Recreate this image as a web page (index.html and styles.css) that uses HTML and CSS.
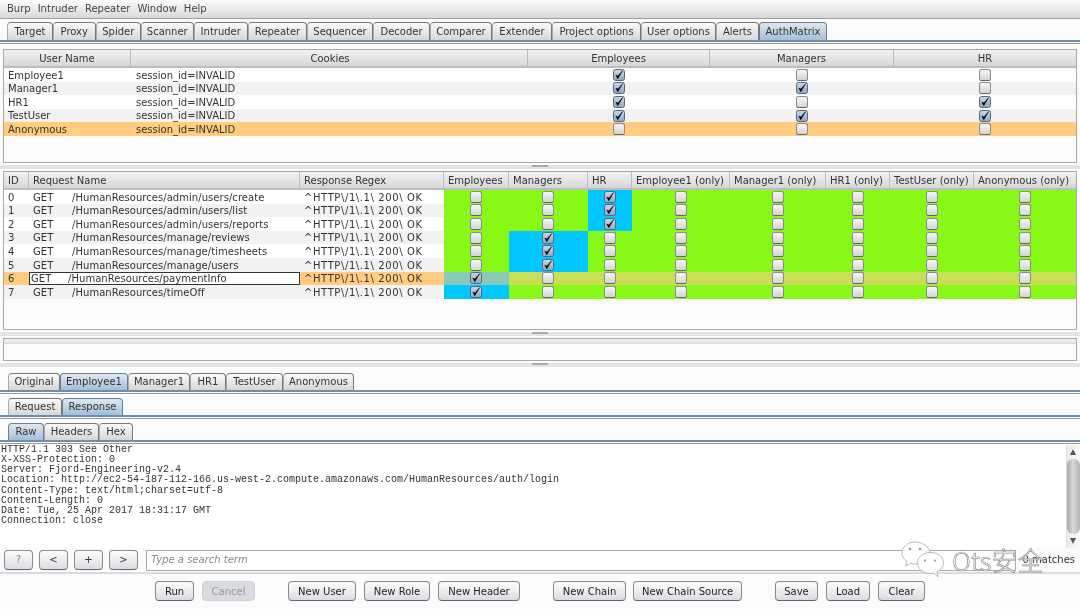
FILE: index.html
```html
<!DOCTYPE html>
<html lang="en">
<head>
<meta charset="utf-8">
<title>Burp Suite - AuthMatrix</title>
<link rel="stylesheet" href="styles.css">
</head>
<body>
<div class="app">
  <nav class="menu"><span>Burp</span><span>Intruder</span><span>Repeater</span><span>Window</span><span>Help</span></nav>

  <div class="tabs main-tabs">
    <span class="tab">Target</span><span class="tab">Proxy</span><span class="tab">Spider</span><span class="tab">Scanner</span><span class="tab">Intruder</span><span class="tab">Repeater</span><span class="tab">Sequencer</span><span class="tab">Decoder</span><span class="tab">Comparer</span><span class="tab">Extender</span><span class="tab">Project options</span><span class="tab">User options</span><span class="tab">Alerts</span><span class="tab active">AuthMatrix</span>
  </div>

  <section class="panel users">
    <div class="row head center"><span>User Name</span><span>Cookies</span><span>Employees</span><span>Managers</span><span>HR</span></div>
    <div class="row"><span>Employee1</span><span>session_id=INVALID</span><span class="c"><i class="cb on"></i></span><span class="c"><i class="cb"></i></span><span class="c"><i class="cb"></i></span></div>
    <div class="row alt"><span>Manager1</span><span>session_id=INVALID</span><span class="c"><i class="cb on"></i></span><span class="c"><i class="cb on"></i></span><span class="c"><i class="cb"></i></span></div>
    <div class="row"><span>HR1</span><span>session_id=INVALID</span><span class="c"><i class="cb on"></i></span><span class="c"><i class="cb"></i></span><span class="c"><i class="cb on"></i></span></div>
    <div class="row alt"><span>TestUser</span><span>session_id=INVALID</span><span class="c"><i class="cb on"></i></span><span class="c"><i class="cb on"></i></span><span class="c"><i class="cb on"></i></span></div>
    <div class="row sel"><span>Anonymous</span><span>session_id=INVALID</span><span class="c"><i class="cb"></i></span><span class="c"><i class="cb"></i></span><span class="c"><i class="cb"></i></span></div>
  </section>

  <div class="split"></div>

  <section class="panel requests">
    <div class="row head"><span>ID</span><span>Request Name</span><span>Response Regex</span><span>Employees</span><span>Managers</span><span>HR</span><span>Employee1 (only)</span><span>Manager1 (only)</span><span>HR1 (only)</span><span>TestUser (only)</span><span>Anonymous (only)</span></div>
    <div class="row"><span>0</span><span class="req"><b>GET</b>/HumanResources/admin/users/create</span><span class="rx">^HTTP\/1\.1\ 200\ OK</span><span class="c g"><i class="cb"></i></span><span class="c g"><i class="cb"></i></span><span class="c b"><i class="cb on"></i></span><span class="c g"><i class="cb"></i></span><span class="c g"><i class="cb"></i></span><span class="c g"><i class="cb"></i></span><span class="c g"><i class="cb"></i></span><span class="c g"><i class="cb"></i></span></div>
    <div class="row alt"><span>1</span><span class="req"><b>GET</b>/HumanResources/admin/users/list</span><span class="rx">^HTTP\/1\.1\ 200\ OK</span><span class="c g"><i class="cb"></i></span><span class="c g"><i class="cb"></i></span><span class="c b"><i class="cb on"></i></span><span class="c g"><i class="cb"></i></span><span class="c g"><i class="cb"></i></span><span class="c g"><i class="cb"></i></span><span class="c g"><i class="cb"></i></span><span class="c g"><i class="cb"></i></span></div>
    <div class="row"><span>2</span><span class="req"><b>GET</b>/HumanResources/admin/users/reports</span><span class="rx">^HTTP\/1\.1\ 200\ OK</span><span class="c g"><i class="cb"></i></span><span class="c g"><i class="cb"></i></span><span class="c b"><i class="cb on"></i></span><span class="c g"><i class="cb"></i></span><span class="c g"><i class="cb"></i></span><span class="c g"><i class="cb"></i></span><span class="c g"><i class="cb"></i></span><span class="c g"><i class="cb"></i></span></div>
    <div class="row alt"><span>3</span><span class="req"><b>GET</b>/HumanResources/manage/reviews</span><span class="rx">^HTTP\/1\.1\ 200\ OK</span><span class="c g"><i class="cb"></i></span><span class="c b"><i class="cb on"></i></span><span class="c g"><i class="cb"></i></span><span class="c g"><i class="cb"></i></span><span class="c g"><i class="cb"></i></span><span class="c g"><i class="cb"></i></span><span class="c g"><i class="cb"></i></span><span class="c g"><i class="cb"></i></span></div>
    <div class="row"><span>4</span><span class="req"><b>GET</b>/HumanResources/manage/timesheets</span><span class="rx">^HTTP\/1\.1\ 200\ OK</span><span class="c g"><i class="cb"></i></span><span class="c b"><i class="cb on"></i></span><span class="c g"><i class="cb"></i></span><span class="c g"><i class="cb"></i></span><span class="c g"><i class="cb"></i></span><span class="c g"><i class="cb"></i></span><span class="c g"><i class="cb"></i></span><span class="c g"><i class="cb"></i></span></div>
    <div class="row alt"><span>5</span><span class="req"><b>GET</b>/HumanResources/manage/users</span><span class="rx">^HTTP\/1\.1\ 200\ OK</span><span class="c g"><i class="cb"></i></span><span class="c b"><i class="cb on"></i></span><span class="c g"><i class="cb"></i></span><span class="c g"><i class="cb"></i></span><span class="c g"><i class="cb"></i></span><span class="c g"><i class="cb"></i></span><span class="c g"><i class="cb"></i></span><span class="c g"><i class="cb"></i></span></div>
    <div class="row sel"><span>6</span><span class="req editing"><b>GET</b>/HumanResources/paymentInfo</span><span class="rx">^HTTP\/1\.1\ 200\ OK</span><span class="c ob"><i class="cb on"></i></span><span class="c og"><i class="cb"></i></span><span class="c og"><i class="cb"></i></span><span class="c og"><i class="cb"></i></span><span class="c og"><i class="cb"></i></span><span class="c og"><i class="cb"></i></span><span class="c og"><i class="cb"></i></span><span class="c og"><i class="cb"></i></span></div>
    <div class="row alt"><span>7</span><span class="req"><b>GET</b>/HumanResources/timeOff</span><span class="rx">^HTTP\/1\.1\ 200\ OK</span><span class="c b"><i class="cb on"></i></span><span class="c g"><i class="cb"></i></span><span class="c g"><i class="cb"></i></span><span class="c g"><i class="cb"></i></span><span class="c g"><i class="cb"></i></span><span class="c g"><i class="cb"></i></span><span class="c g"><i class="cb"></i></span><span class="c g"><i class="cb"></i></span></div>
  </section>

  <div class="split"></div>

  <div class="panel chains"><div class="chains-head"></div></div>

  <div class="split low"></div>

  <div class="tabs sub-tabs user-tabs">
    <span class="tab">Original</span><span class="tab active">Employee1</span><span class="tab">Manager1</span><span class="tab">HR1</span><span class="tab">TestUser</span><span class="tab">Anonymous</span>
  </div>
  <div class="tabs sub-tabs msg-tabs">
    <span class="tab">Request</span><span class="tab active">Response</span>
  </div>
  <div class="tabs sub-tabs view-tabs">
    <span class="tab active">Raw</span><span class="tab">Headers</span><span class="tab">Hex</span>
  </div>

  <div class="viewer">
    <pre class="raw">HTTP/1.1 303 See Other
X-XSS-Protection: 0
Server: Fjord-Engineering-v2.4
Location: http://ec2-54-187-112-166.us-west-2.compute.amazonaws.com/HumanResources/auth/login
Content-Type: text/html;charset=utf-8
Content-Length: 0
Date: Tue, 25 Apr 2017 18:31:17 GMT
Connection: close</pre>
    <div class="scrollbar">
      <span class="arrow up"></span>
      <span class="thumb"></span>
      <span class="arrow down"></span>
    </div>
  </div>

  <div class="search">
    <span class="btn small">?</span><span class="btn small">&lt;</span><span class="btn small">+</span><span class="btn small">&gt;</span>
    <span class="search-box">Type a search term</span>
    <span class="matches">0 matches</span>
  </div>

  <div class="actions">
    <div class="group run-group"><span class="btn">Run</span><span class="btn off">Cancel</span></div>
    <div class="group new-group"><span class="btn">New User</span><span class="btn">New Role</span><span class="btn">New Header</span></div>
    <div class="group chain-group"><span class="btn">New Chain</span><span class="btn">New Chain Source</span></div>
    <div class="group file-group"><span class="btn">Save</span><span class="btn">Load</span><span class="btn">Clear</span></div>
  </div>

  <div class="watermark">
    <svg class="wechat" width="44" height="38" viewBox="0 0 44 38">
      <path d="M14 1C6.5 1 1 6 1 12c0 3.500 2 6.500 5 8.500L4.500 25l5-2.600c1.500.4 3 .6 4.500.6 1 0 2-.1 3-.3C20 16 27 12 29 11.500 28 5.500 21.500 1 14 1z"/>
      <path d="M29 11.500c-7 0-12.500 4.500-12.500 10.500S22 32.500 29 32.500c1.300 0 2.600-.2 3.800-.5l4.200 4-1-5.300c4-2 6.500-5 6.500-8.700 0-6-5.500-10.500-12.500-10.500z"/>
      <circle class="eye" cx="9" cy="8" r="1.300"/><circle class="eye" cx="19" cy="8" r="1.300"/><circle class="eye" cx="24" cy="19.500" r="1.100"/><circle class="eye" cx="34" cy="19.500" r="1.100"/>
    </svg>
    <span class="wm-text">Ots安全</span>
  </div>
</div>
</body>
</html>
```
FILE: styles.css
```css
* { box-sizing: border-box; }
html, body { margin: 0; height: 100%; overflow: hidden; }
body { background: #fbfbfb; }
.app {
  position: relative;
  width: 1080px;
  height: 609px;
  overflow: hidden;
  font: 10px/1 "DejaVu Sans", sans-serif;
  color: #333;
  filter: blur(.45px);
  background: #fbfbfb;
}
.menu {
  display: flex;
  gap: 7px;
  height: 19px;
  padding: 4px 0 0 7px;
  background: linear-gradient(#fcfcfc, #d9d9d9);
  border-bottom: 1px solid #a0a0a0;
  color: #444;
}

/* tabs */
.tabs {
  display: grid;
  align-items: end;
  background: linear-gradient(#6f8fae, #6f8fae) 0 100% / 100% 2px no-repeat;
  border-bottom: 1px solid #9a9a9a;
}
.tab {
  display: flex;
  align-items: center;
  justify-content: center;
  height: 100%;
  border: 1px solid #777;
  border-left-color: #aaa;
  border-bottom: 0;
  border-radius: 4px 4px 0 0;
  background: linear-gradient(#fbfbfb, #d6d6d6);
  white-space: nowrap;
}
.tab.active { background: linear-gradient(#dfe8f0, #a4bed6); border-color: #6a7f94; }
.main-tabs {
  height: 25px;
  padding: 3px 0 3px 7px;
  background-position: 0 calc(100% - 1px);
  grid-template-columns: 46px 42.500px 45.500px 52.500px 54.500px 59px 66px 57px 62px 60px 89px 75px 43px 68px;
  grid-auto-rows: 100%;
}
.sub-tabs {
  height: 21px;
  padding: 0 0 3px 8px;
  background-position: 0 calc(100% - 1px);
  margin-top: 4px;
}
.user-tabs { grid-template-columns: 52px 68px 62px 36px 57px 71px; height: 21px; margin-top: 6px; }
.msg-tabs { grid-template-columns: 54px 61px; }
.view-tabs { grid-template-columns: 36px 55px 34px; }

/* tables */
.panel {
  margin: 0 3px;
  border: 1px solid #a8a8a8;
  background: #fbfbfb;
}
.users { height: 114px; margin-top: 5px; }
.requests { height: 159px; }
.chains { height: 23px; }
.chains-head { height: 5px; background: linear-gradient(#f2f2f2, #dcdcdc); }
.row { display: grid; height: 13.600px; background: #fff; align-items: stretch; }
.row > span { display: flex; align-items: center; padding: 1.600px 0 0 4px; min-width: 0; white-space: nowrap; }
.row.alt { background: #f2f2f2; }
.row.sel { background: #ffcc80; }
.users .row { grid-template-columns: 127px 397px 182px 184px 182px; }
.requests .row { grid-template-columns: 25px 271px 144px 65px 79px 44px 98px 96px 64px 84px 102px; }
.row.head {
  height: 18px;
  background: linear-gradient(#f3f3f3, #d6d6d6);
  border-bottom: 2px solid #bdbdbd;
}
.row.head > span { border-right: 1px solid #bbb; padding-top: 1px; }
.row.head > span:last-child { border-right: 0; }
.row.center > span { justify-content: center; padding-left: 0; }
.row.center > span:nth-child(2) { padding-left: 2px; }
.users .row:not(.head) > span:nth-child(2) { padding-left: 5px; }
.row > .c { justify-content: center; padding: 0; }
.requests .row > .c { padding-right: 1px; }
.req { letter-spacing: .05px; }
.rx { letter-spacing: .6px; }
.g { background: #88f916; }
.b { background: #00c8ff; }
.og { background: #c9df55; }
.ob { background: #88c9b8; }
.req b { font-weight: 400; width: 39px; flex: none; }
.row > .req.editing {
  padding: 1px 0 0 1px;
  background: #fff;
  border: 1px solid #333;
}
.req.editing b { width: 37px; }
.cb {
  display: block;
  width: 12px;
  height: 12px;
  border: 1px solid #8c8c8c;
  border-bottom-color: #666;
  border-radius: 2.500px;
  background: linear-gradient(#f7f7f7, #d4d4d4);
}
.cb.on {
  border-color: #55677a;
  background:
    url("data:image/svg+xml,%3Csvg xmlns='http://www.w3.org/2000/svg' viewBox='0 0 10 10'%3E%3Cpath d='M1.800 5.200 3.800 8.800 8.600 0.600 4 6z' fill='%23000' stroke='%23000' stroke-width='.5'/%3E%3C/svg%3E") center / 10px 10px no-repeat,
    linear-gradient(#c8d6e4, #8fa9c2);
}

/* splitters */
.split {
  position: relative;
  height: 8px;
  background: linear-gradient(#fbfbfb 0 2px, #e4e4e4 2px 6px, #fbfbfb 6px);
}
.split::after {
  content: "";
  position: absolute;
  left: 532px;
  top: 2px;
  width: 16px;
  height: 2px;
  background: #aaa;
}
.split.low { height: 6px; }

/* response viewer */
.viewer { display: flex; height: 103px; background: #fff; margin-top: 1px; }
.raw {
  flex: 1;
  margin: 0;
  padding: 0 0 0 1px;
  font: 10px/10.150px "Liberation Mono", monospace;
  color: #333;
  overflow: hidden;
}
.scrollbar {
  display: flex;
  flex-direction: column;
  width: 14px;
  background: linear-gradient(90deg, #ececec, #fafafa);
  border-left: 1px solid #ddd;
}
.thumb {
  flex: 1;
  border-radius: 6px;
  background: linear-gradient(90deg, #a8a8a8, #d8d8d8 45%, #b4b4b4);
}
.arrow { height: 14px; position: relative; }
.arrow::after {
  content: "";
  position: absolute;
  left: 3px;
  top: 4px;
  border: 3.500px solid transparent;
  border-top: 0;
  border-bottom: 6px solid #555;
}
.arrow.down::after { border-bottom: 0; border-top: 6px solid #555; }

/* search */
.search {
  display: flex;
  align-items: center;
  height: 26px;
  padding: 2px 5px 2px 4px;
  gap: 6px;
  border-bottom: 2px solid #dcdcdc;
}
.btn {
  display: flex;
  align-items: center;
  justify-content: center;
  height: 20px;
  border: 1px solid #8a8a8a;
  border-bottom-color: #666;
  border-radius: 4px;
  background: linear-gradient(#fdfdfd, #d9dde3);
  color: #222;
  white-space: nowrap;
}
.btn.small { width: 29px; color: #333; flex: none; }
.btn.small:first-child { color: #888; }
.btn.off { color: #999; background: #d8dbdf; border-color: #d0d0d0; }
.search-box {
  flex: 1;
  display: flex;
  align-items: center;
  height: 21px;
  margin-left: 2px;
  padding-left: 4px;
  background: #fff;
  border: 1px solid #aaa;
  color: #888;
  font-style: italic;
}
.matches { flex: none; color: #333; white-space: nowrap; }

/* action buttons */
.actions {
  display: flex;
  gap: 33px;
  padding: 7px 0 0 155px;
}
.actions .btn { padding-top: 1px; }
.group { display: grid; gap: 8px; }
.run-group { grid-template-columns: 39px 53px; }
.new-group { grid-template-columns: 68px 66px 82px; }
.chain-group { grid-template-columns: 73px 109px; gap: 7px; }
.file-group { grid-template-columns: 43px 44px 47px; }

/* watermark */
.watermark {
  position: absolute;
  left: 901px;
  top: 541px;
  display: flex;
  align-items: center;
  gap: 7px;
}
.wechat path { fill: rgba(255,255,255,.92); stroke: #a8a8a8; stroke-width: .8; }
.wechat .eye { fill: #999; }
.wm-text {
  font: 300 26px/1 "Noto Sans CJK SC", "Noto Sans", sans-serif;
  color: rgba(255,255,255,.92);
  -webkit-text-stroke: .7px #8f8f8f;
}
```
